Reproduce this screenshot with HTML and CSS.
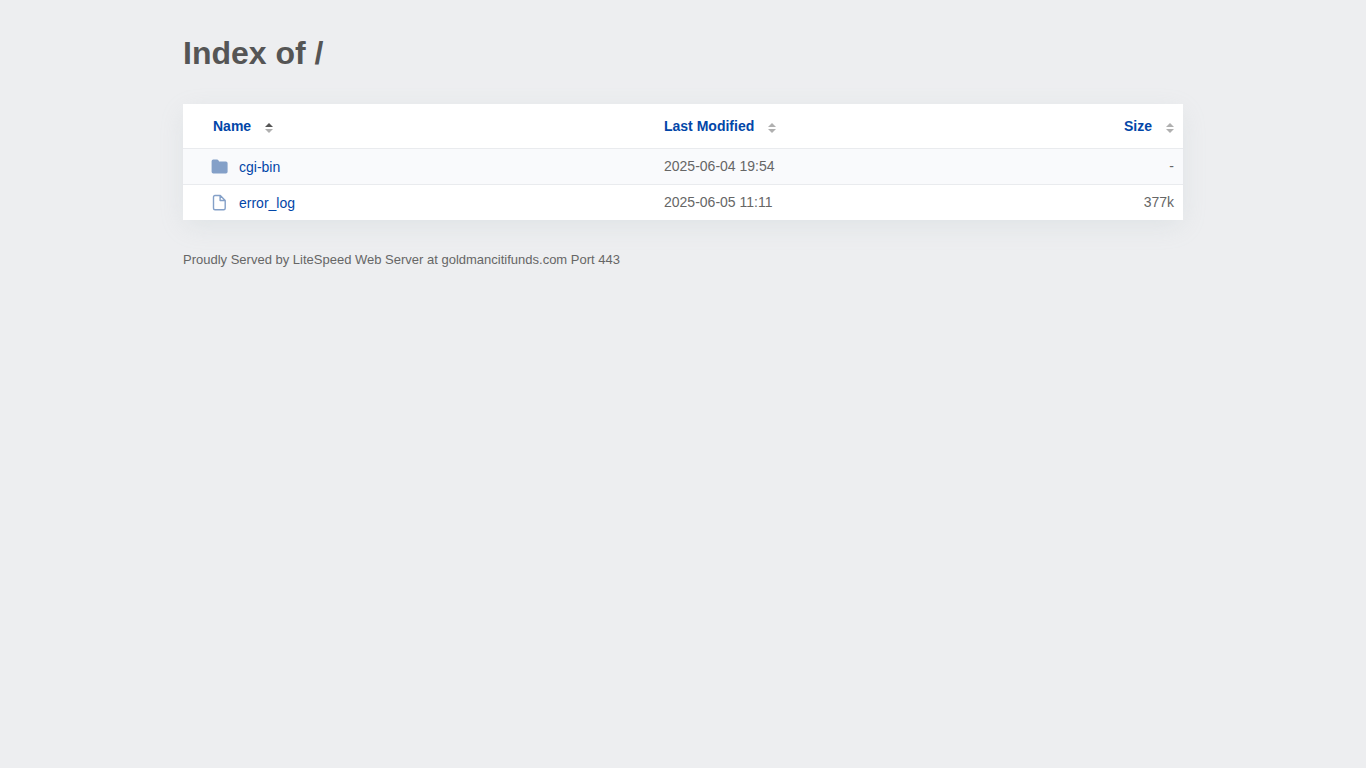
FILE: index.html
```html
<!DOCTYPE html>
<html lang="en">
<head>
<meta charset="utf-8">
<meta name="viewport" content="width=device-width, initial-scale=1">
<title>Index of /</title>
<link rel="stylesheet" href="styles.css">
</head>
<body>
<main class="content">
  <h1 class="title">Index of /</h1>
  <table class="listing">
    <thead>
      <tr>
        <th class="col-name" scope="col" aria-sort="ascending"><a class="sort" href="?N=D">Name<svg class="arrows" viewBox="0 0 8 10" aria-hidden="true"><path class="up active" d="M0 4 4 0 8 4Z"/><path class="down" d="M0 6 4 10 8 6Z"/></svg></a></th>
        <th class="col-date" scope="col"><a class="sort" href="?M=A">Last Modified<svg class="arrows" viewBox="0 0 8 10" aria-hidden="true"><path class="up" d="M0 4 4 0 8 4Z"/><path class="down" d="M0 6 4 10 8 6Z"/></svg></a></th>
        <th class="col-size" scope="col"><a class="sort" href="?S=A">Size<svg class="arrows" viewBox="0 0 8 10" aria-hidden="true"><path class="up" d="M0 4 4 0 8 4Z"/><path class="down" d="M0 6 4 10 8 6Z"/></svg></a></th>
      </tr>
    </thead>
    <tbody>
      <tr>
        <td class="col-name"><a class="entry" href="cgi-bin/"><svg class="icon" viewBox="0 0 18 18" aria-hidden="true"><path class="folder" d="M.6 3.2Q.6 1.5 2.3 1.5H6Q6.9 1.5 7.4 2.3L8.1 3.5H14.9Q16.6 3.5 16.6 5.2V13.8Q16.6 15.5 14.9 15.5H2.3Q.6 15.5 .6 13.8Z"/></svg>cgi-bin</a></td>
        <td class="col-date">2025-06-04 19:54</td>
        <td class="col-size">-</td>
      </tr>
      <tr>
        <td class="col-name"><a class="entry" href="error_log"><svg class="icon" viewBox="0 0 18 18" aria-hidden="true"><path class="file" d="M4 1.5H9.3L14.2 6.4V14.2Q14.2 15.7 12.7 15.7H4Q2.5 15.7 2.5 14.2V3Q2.5 1.5 4 1.5ZM9.1 1.7V6.5H14"/></svg>error_log</a></td>
        <td class="col-date">2025-06-05 11:11</td>
        <td class="col-size">377k</td>
      </tr>
    </tbody>
  </table>
  <footer class="server">Proudly Served by LiteSpeed Web Server at goldmancitifunds.com Port 443</footer>
</main>
</body>
</html>
```
FILE: styles.css
```css
body {
  margin: 0;
  padding: 32px 20px;
  background: #edeef0;
  color: #666;
  font-family: "Liberation Sans", Arial, sans-serif;
  font-size: 14px;
  line-height: 20px;
}

.content {
  max-width: 1000px;
  margin: 0 auto;
}

.title {
  margin: 0 0 30px;
  color: #555;
  font-size: 32px;
  line-height: 42px;
}

.listing {
  width: 100%;
  table-layout: fixed;
  border-collapse: separate;
  border-spacing: 0;
  background: #fff;
  box-shadow: 0 7px 24px -3px rgba(170, 190, 193, 0.24);
}

.listing th,
.listing td {
  box-sizing: border-box;
  padding: 7px 9px 8px;
  text-align: left;
}

.listing td.col-name {
  padding-top: 8px;
  padding-bottom: 7px;
}

.listing th {
  padding: 12px 9px;
  border-bottom: 1px solid #e9ebee;
}

.listing tbody tr:nth-child(odd) {
  background: #f9fafc;
}

.listing tbody tr:not(:last-child) td {
  border-bottom: 1px solid #e9ebee;
}

.listing .col-name {
  width: 47%;
  padding-left: 28px;
}

.listing th.col-name {
  padding-left: 30px;
}

.listing .col-date {
  padding-left: 11px;
}

.listing .col-size {
  width: 15%;
  text-align: right;
}

.sort,
.entry {
  color: #0246a8;
  text-decoration: none;
}

.sort:hover,
.entry:hover {
  text-decoration: underline;
}

.sort {
  display: inline-flex;
  align-items: center;
  gap: 14px;
}

.arrows {
  width: 8px;
  height: 10px;
  margin-top: 4px;
}

.up,
.down {
  fill: #b0b0b0;
}

.active {
  fill: #555;
}

.entry {
  display: flex;
  align-items: center;
  gap: 10px;
}

.icon {
  width: 18px;
  height: 18px;
}

.folder {
  fill: #84a0c8;
}

.file {
  fill: none;
  stroke: #84a0c8;
  stroke-width: 1.4;
  stroke-linejoin: round;
}

.server {
  margin-top: 30px;
  font-size: 13px;
}
```
